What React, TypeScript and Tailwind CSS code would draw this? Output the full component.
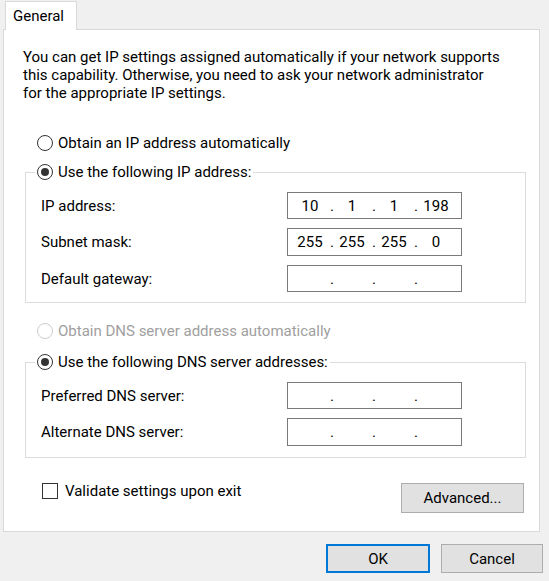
import React from 'react'

const font = { fontFamily: '"Segoe UI", Roboto, "Noto Sans", sans-serif' }

function Radio({ checked, disabled }: { checked?: boolean; disabled?: boolean }) {
  return (
    <span
      className={
        disabled
          ? 'flex h-4 w-4 shrink-0 items-center justify-center rounded-full border border-[#cccccc] bg-white'
          : 'flex h-4 w-4 shrink-0 items-center justify-center rounded-full border border-[#333333] bg-white'
      }
    >
      {checked && <span className="h-2 w-2 rounded-full bg-[#333333]" />}
    </span>
  )
}

function IpField({ parts }: { parts: string[] }) {
  return (
    <div className="flex h-full w-[175px] items-center border border-[#7a7a7a] bg-white pl-[4px]">
      {parts.map((p, i) => (
        <React.Fragment key={i}>
          {i > 0 && <span className="flex w-[6px] justify-end">.</span>}
          <span className="w-[36px] text-center">{p}</span>
        </React.Fragment>
      ))}
    </div>
  )
}

function FieldRow({ label, parts, className }: { label: string; parts: string[]; className: string }) {
  return (
    <div className={'ml-[15px] flex items-center ' + className}>
      <span className="w-[246px]">{label}</span>
      <IpField parts={parts} />
    </div>
  )
}

const empty = ['', '', '', '']

export default function App() {
  return (
    <div className="h-[581px] w-[549px] overflow-hidden bg-[#f0f0f0] text-[15px] leading-[18px] text-black" style={font}>
      {/* tab strip */}
      <div className="pl-[5px] pt-[1px]">
        <div className="relative z-10 -mb-px flex h-[29px] w-[72px] items-center border border-b-0 border-[#d9d9d9] bg-white pl-[7px]">
          General
        </div>
      </div>

      {/* tab page */}
      <div className="ml-[3px] flex h-[503px] w-[537px] flex-col border border-[#d9d9d9] bg-white">
        <p className="mt-[18px] pl-[19px]">
          You can get IP settings assigned automatically if your network supports
          <br />
          this capability. Otherwise, you need to ask your network administrator
          <br />
          for the appropriate IP settings.
        </p>

        <div className="ml-[33px] mt-[32px] flex h-[18px] items-center gap-[5px]">
          <Radio />
          <span>Obtain an IP address automatically</span>
        </div>

        <fieldset className="ml-[21px] mt-[11px] w-[501px] border border-[#dcdcdc] pb-[10px]">
          <legend className="ml-[9px] px-[2px]">
            <span className="flex h-[18px] items-center gap-[5px]">
              <Radio checked />
              <span>Use the following IP address:</span>
            </span>
          </legend>
          <FieldRow label="IP address:" parts={['10', '1', '1', '198']} className="mt-[11px] h-[27px]" />
          <FieldRow label="Subnet mask:" parts={['255', '255', '255', '0']} className="mt-[9px] h-[28px]" />
          <FieldRow label="Default gateway:" parts={empty} className="mt-[9px] h-[27px]" />
        </fieldset>

        <div className="ml-[33px] mt-[19px] flex h-[18px] items-center gap-[5px] text-[#a0a0a0]">
          <Radio disabled />
          <span>Obtain DNS server address automatically</span>
        </div>

        <fieldset className="ml-[21px] mt-[13px] w-[501px] border border-[#dcdcdc] pb-[11px]">
          <legend className="ml-[9px] px-[2px]">
            <span className="flex h-[18px] items-center gap-[5px]">
              <Radio checked />
              <span>Use the following DNS server addresses:</span>
            </span>
          </legend>
          <FieldRow label="Preferred DNS server:" parts={empty} className="mt-[11px] h-[27px]" />
          <FieldRow label="Alternate DNS server:" parts={empty} className="mt-[9px] h-[28px]" />
        </fieldset>

        <div className="ml-[38px] mr-[15px] mt-[25px] flex items-start justify-between">
          <div className="mt-[-1px] flex h-[18px] items-center gap-[7px]">
            <span className="h-4 w-4 border border-[#333333] bg-white" />
            <span>Validate settings upon exit</span>
          </div>
          <button className="h-[30px] w-[123px] border border-[#adadad] bg-[#e1e1e1]">Advanced...</button>
        </div>
      </div>

      {/* dialog buttons */}
      <div className="mt-[12px] flex justify-end gap-[11px] pr-[6px]">
        <button className="h-[29px] w-[104px] border-2 border-[#0078d7] bg-[#e1e1e1]">OK</button>
        <button className="h-[29px] w-[102px] border border-[#adadad] bg-[#e1e1e1]">Cancel</button>
      </div>
    </div>
  )
}
